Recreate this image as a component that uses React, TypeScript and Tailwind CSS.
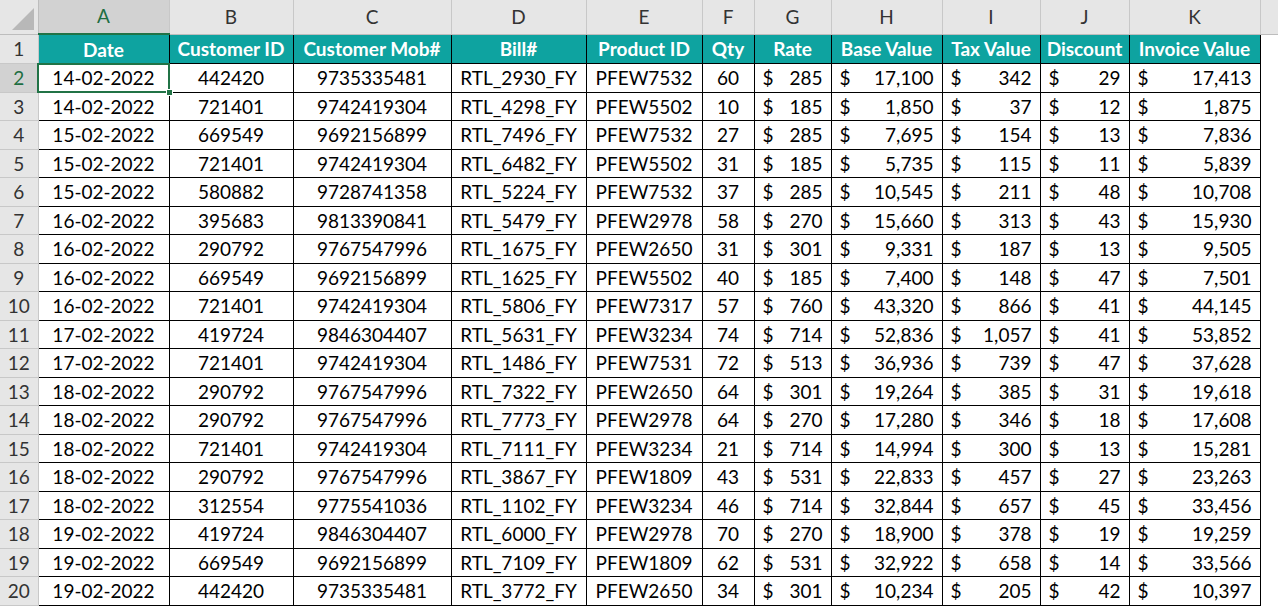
const rows = [
["14-02-2022","442420","9735335481","RTL_2930_FY","PFEW7532","60","285","17,100","342","29","17,413"],
["14-02-2022","721401","9742419304","RTL_4298_FY","PFEW5502","10","185","1,850","37","12","1,875"],
["15-02-2022","669549","9692156899","RTL_7496_FY","PFEW7532","27","285","7,695","154","13","7,836"],
["15-02-2022","721401","9742419304","RTL_6482_FY","PFEW5502","31","185","5,735","115","11","5,839"],
["15-02-2022","580882","9728741358","RTL_5224_FY","PFEW7532","37","285","10,545","211","48","10,708"],
["16-02-2022","395683","9813390841","RTL_5479_FY","PFEW2978","58","270","15,660","313","43","15,930"],
["16-02-2022","290792","9767547996","RTL_1675_FY","PFEW2650","31","301","9,331","187","13","9,505"],
["16-02-2022","669549","9692156899","RTL_1625_FY","PFEW5502","40","185","7,400","148","47","7,501"],
["16-02-2022","721401","9742419304","RTL_5806_FY","PFEW7317","57","760","43,320","866","41","44,145"],
["17-02-2022","419724","9846304407","RTL_5631_FY","PFEW3234","74","714","52,836","1,057","41","53,852"],
["17-02-2022","721401","9742419304","RTL_1486_FY","PFEW7531","72","513","36,936","739","47","37,628"],
["18-02-2022","290792","9767547996","RTL_7322_FY","PFEW2650","64","301","19,264","385","31","19,618"],
["18-02-2022","290792","9767547996","RTL_7773_FY","PFEW2978","64","270","17,280","346","18","17,608"],
["18-02-2022","721401","9742419304","RTL_7111_FY","PFEW3234","21","714","14,994","300","13","15,281"],
["18-02-2022","290792","9767547996","RTL_3867_FY","PFEW1809","43","531","22,833","457","27","23,263"],
["18-02-2022","312554","9775541036","RTL_1102_FY","PFEW3234","46","714","32,844","657","45","33,456"],
["19-02-2022","419724","9846304407","RTL_6000_FY","PFEW2978","70","270","18,900","378","19","19,259"],
["19-02-2022","669549","9692156899","RTL_7109_FY","PFEW1809","62","531","32,922","658","14","33,566"],
["19-02-2022","442420","9735335481","RTL_3772_FY","PFEW2650","34","301","10,234","205","42","10,397"],
];
const widths=[131,124,158,135,116,52,77,111,98,89,131];
const letters=["A","B","C","D","E","F","G","H","I","J","K"];
const heads=["Date","Customer ID","Customer Mob#","Bill#","Product ID","Qty","Rate","Base Value","Tax Value","Discount","Invoice Value"];
export default function App(){
  return (
    <div className="w-[1278px] h-[614px] overflow-hidden bg-white text-[19px] text-black" style={{fontFamily:"Lato, 'Liberation Sans', sans-serif"}}>
      <table className="border-collapse table-fixed" style={{width:38+widths.reduce((a,b)=>a+b,0)+60}}>
        <colgroup>
          <col style={{width:38}}/>
          {widths.map((w,i)=><col key={i} style={{width:w}}/>)}
          <col style={{width:60}}/>
        </colgroup>
        <tbody>
          <tr className="h-[34px] bg-[#e6e6e6]">
            <td className="border-r border-b border-[#bdbdbd] p-0 relative">
              <div className="absolute right-[4px] bottom-[4px] w-0 h-0 border-l-[22px] border-l-transparent border-b-[22px] border-b-[#b8b8b8]"/>
            </td>
            {letters.map((l,i)=>(
              <td key={l} className={`text-center border-r border-[#c8c8c8] p-0 ${i===0?"bg-[#d2d2d2] text-[#1e6e42] border-b-2 border-b-[#217346]":"border-b border-b-[#bdbdbd] text-[#333]"}`}>{l}</td>
            ))}
            <td className="border-b border-[#bdbdbd]"></td>
          </tr>
          <tr className="h-[28.5px]">
            <td className="bg-[#e6e6e6] text-center border-r border-b border-[#c8c8c8] text-[#333] p-0">1</td>
            {heads.map(h=>(
              <td key={h} className="bg-[#0ea3a0] text-white font-bold text-center border border-black p-0 whitespace-nowrap overflow-hidden leading-none">{h}</td>
            ))}
            <td></td>
          </tr>
          {rows.map((r,ri)=>(
            <tr key={ri} className="h-[28.5px]">
              <td className={`text-center border-r border-b border-[#c8c8c8] p-0 leading-none ${ri===0?"bg-[#d2d2d2] text-[#1e6e42]":"bg-[#e6e6e6] text-[#333]"}`}>{ri+2}</td>
              {r.map((c,ci)=>{
                const cur = ci>=6;
                const sel = ri===0&&ci===0;
                return (
                  <td key={ci} className={`border border-black p-0 leading-none whitespace-nowrap relative ${sel?"outline-2 outline-[#217346] -outline-offset-1":""}`}>
                    {cur ? (
                      <div className="flex justify-between px-[8px]"><span>$</span><span>{c}</span></div>
                    ) : (
                      <div className="text-center">{c}</div>
                    )}
                    {sel && <div className="absolute -right-[4px] -bottom-[4px] w-[7px] h-[7px] bg-[#217346] border border-white z-10"/>}
                  </td>
                );
              })}
              <td></td>
            </tr>
          ))}
        </tbody>
      </table>
    </div>
  );
}
